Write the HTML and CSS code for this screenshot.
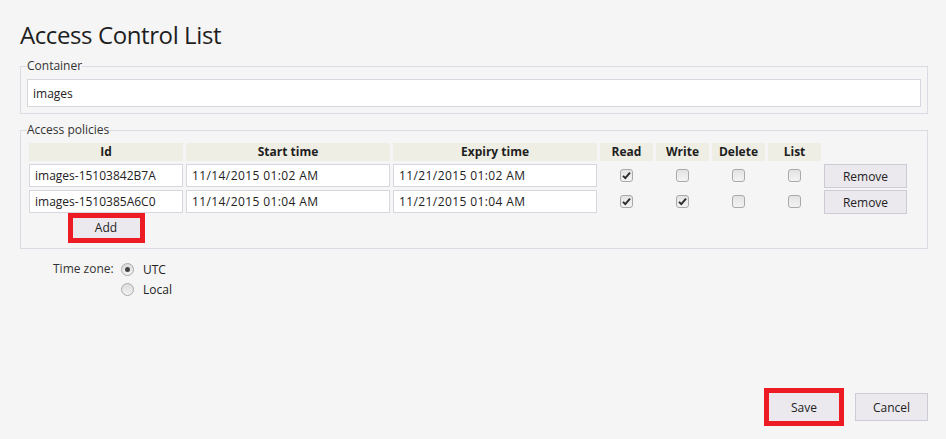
FILE: index.html
```html
<!DOCTYPE html>
<html>
<head>
<meta charset="utf-8">
<link rel="stylesheet" href="styles.css">
</head>
<body>
<div class="page">
  <h1 class="title">Access Control List</h1>

  <fieldset class="group group-container">
    <legend class="legend">Container</legend>
    <input class="text full" type="text" value="images">
  </fieldset>

  <fieldset class="group group-policies">
    <legend class="legend legend-policies">Access policies</legend>
    <div class="grid">
      <div class="th">Id</div>
      <div class="th">Start time</div>
      <div class="th">Expiry time</div>
      <div class="th">Read</div>
      <div class="th">Write</div>
      <div class="th">Delete</div>
      <div class="th">List</div>
      <div class="th-empty"></div>

      <input class="text" type="text" value="images-15103842B7A">
      <input class="text date" type="text" value="11/14/2015 01:02 AM">
      <input class="text date" type="text" value="11/21/2015 01:02 AM">
      <div class="cb-cell"><span class="cb"><svg viewBox="0 0 13 13" width="13" height="13"><path d="M3 6.8 L5.3 9.2 L10 3.6" fill="none" stroke="#2b2b2b" stroke-width="1.9"/></svg></span></div>
      <div class="cb-cell"><span class="cb"></span></div>
      <div class="cb-cell"><span class="cb"></span></div>
      <div class="cb-cell"><span class="cb"></span></div>
      <button class="btn btn-row">Remove</button>

      <input class="text" type="text" value="images-1510385A6C0">
      <input class="text date" type="text" value="11/14/2015 01:04 AM">
      <input class="text date" type="text" value="11/21/2015 01:04 AM">
      <div class="cb-cell"><span class="cb"><svg viewBox="0 0 13 13" width="13" height="13"><path d="M3 6.8 L5.3 9.2 L10 3.6" fill="none" stroke="#2b2b2b" stroke-width="1.9"/></svg></span></div>
      <div class="cb-cell"><span class="cb"><svg viewBox="0 0 13 13" width="13" height="13"><path d="M3 6.8 L5.3 9.2 L10 3.6" fill="none" stroke="#2b2b2b" stroke-width="1.9"/></svg></span></div>
      <div class="cb-cell"><span class="cb"></span></div>
      <div class="cb-cell"><span class="cb"></span></div>
      <button class="btn btn-row">Remove</button>

      <div class="add-cell"><span class="hl"><button class="btn btn-add">Add</button></span></div>
    </div>
  </fieldset>

  <div class="tz">
    <div class="tz-label">Time zone:</div>
    <div class="tz-options">
      <div class="radio-row"><span class="radio checked"></span><span>UTC</span></div>
      <div class="radio-row"><span class="radio"></span><span>Local</span></div>
    </div>
  </div>

  <div class="footer">
    <span class="hl hl-save"><button class="btn btn-save">Save</button></span>
    <button class="btn btn-cancel">Cancel</button>
  </div>
</div>
</body>
</html>
```

FILE: styles.css
```css
* { box-sizing: border-box; }

html, body {
  margin: 0;
  padding: 0;
  background: #f5f5f5;
}

body {
  font-family: "Segoe UI", "Open Sans", "Noto Sans", sans-serif;
  font-size: 12px;
  color: #222;
}

.page {
  height: 439px;
  display: flex;
  flex-direction: column;
  padding: 0 18px 13px 20px;
}

.title {
  margin: 19px 0 0;
  font-size: 24px;
  line-height: 32px;
  font-weight: 400;
  color: #1e1e1e;
  letter-spacing: -0.4px;
}

.group {
  margin: 7px 0 0;
  border: 1px solid #dcdbe3;
  min-width: 0;
}

.group-container {
  padding: 5px 6px 6px 6px;
}

.group-policies {
  margin-top: 8px;
  padding: 5px 8px 5px 8px;
}

.legend {
  padding: 0;
  font-size: 12px;
  line-height: 16px;
  color: #333;
}

.legend-policies {
  margin-left: -2px;
}

.text {
  display: block;
  height: 28px;
  border: 1px solid #d8d7e0;
  background: #fff;
  padding: 0 5px;
  font-family: inherit;
  font-size: 12px;
  color: #222;
  outline: none;
  margin: 0;
  min-width: 0;
}

.date {
  letter-spacing: 0.4px;
}

.full { width: 100%; }

.grid {
  display: grid;
  grid-template-columns: 154px 204px 204px 53px 53px 53px 53px 83px;
  grid-template-rows: 18px 23px 23px auto;
  gap: 3px;
}

.grid .text {
  height: 23px;
  width: 100%;
}

.th {
  background: #efeee4;
  font-weight: 700;
  text-align: center;
  line-height: 18px;
  color: #1e1e1e;
}

.cb-cell {
  display: flex;
  align-items: center;
  justify-content: center;
}

.cb {
  width: 13px;
  height: 13px;
  border: 1px solid #a9a9a9;
  border-radius: 3px;
  background: linear-gradient(#e3e3e3, #f3f3f3);
  display: flex;
  align-items: center;
  justify-content: center;
  overflow: hidden;
}

.cb svg { display: block; flex: none; }

.btn {
  font-family: inherit;
  font-size: 12px;
  color: #222;
  background: #ebe9ee;
  border: 1px solid #cdcbd5;
  margin: 0;
  padding: 0;
  cursor: default;
}

.btn-row {
  height: 24px;
  width: 100%;
}

.add-cell {
  grid-column: 1;
  display: flex;
  justify-content: center;
  margin-top: -3px;
}

.hl {
  display: inline-block;
  border: 5px solid #ed1c24;
  line-height: 0;
}

.btn-add {
  width: 67px;
  height: 20px;
  border: none;
  line-height: 20px;
}

.tz {
  display: flex;
  margin-top: 10px;
  padding-left: 33px;
}

.tz-label {
  width: 68px;
  line-height: 20px;
  color: #333;
}

.tz-options {
  display: flex;
  flex-direction: column;
}

.radio-row {
  display: flex;
  align-items: center;
  height: 20px;
  gap: 9px;
  color: #222;
}

.radio {
  width: 13px;
  height: 13px;
  border-radius: 50%;
  border: 1px solid #a9a9a9;
  background: linear-gradient(#dcdcdc, #f2f2f2);
  display: flex;
  align-items: center;
  justify-content: center;
}

.radio.checked::after {
  content: "";
  width: 5px;
  height: 5px;
  border-radius: 50%;
  background: #444;
}

.footer {
  margin-top: auto;
  display: flex;
  justify-content: flex-end;
  align-items: center;
  gap: 11px;
}

.btn-save {
  width: 70px;
  height: 28px;
  border: none;
}

.btn-cancel {
  width: 73px;
  height: 28px;
}
```
